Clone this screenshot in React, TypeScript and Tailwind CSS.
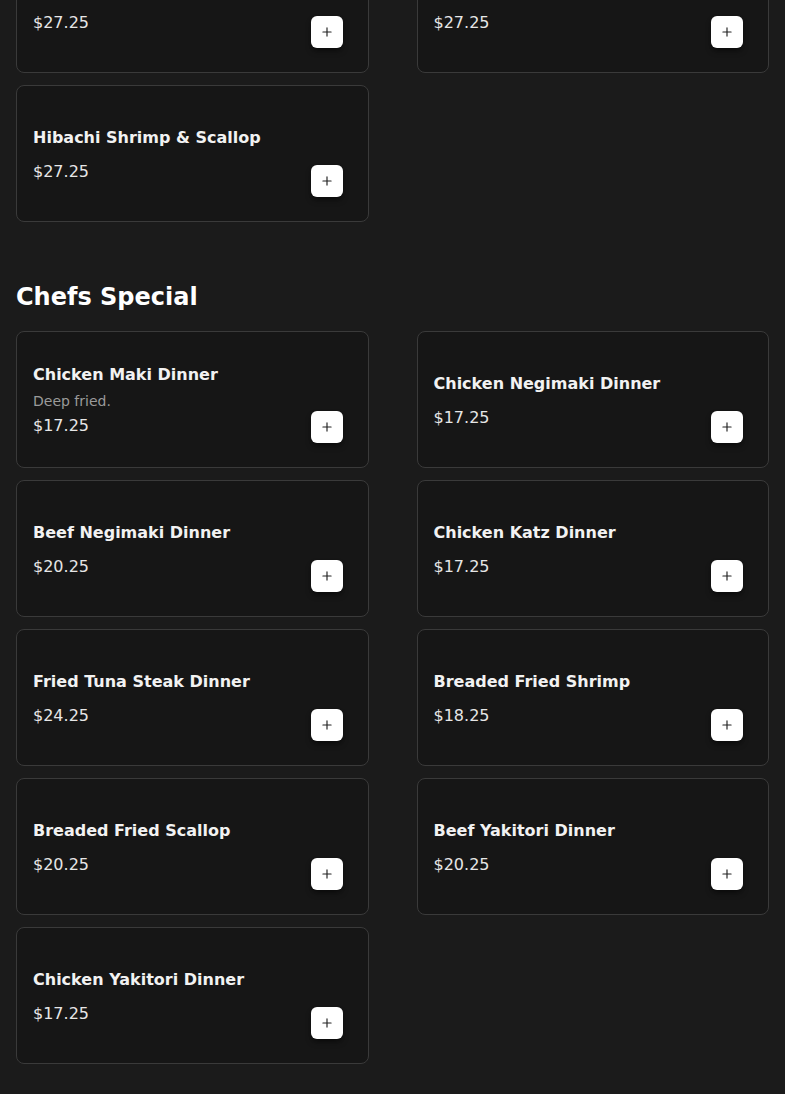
import React from "react";
import { Plus } from "lucide-react";

type Item = {
  name: string;
  price: string;
  description?: string;
};

const hibachi: Item[] = [
  { name: "Hibachi Chicken & Shrimp", price: "$27.25" },
  { name: "Hibachi Steak & Shrimp", price: "$27.25" },
  { name: "Hibachi Shrimp & Scallop", price: "$27.25" },
];

const chefsSpecial: Item[] = [
  { name: "Chicken Maki Dinner", description: "Deep fried.", price: "$17.25" },
  { name: "Chicken Negimaki Dinner", price: "$17.25" },
  { name: "Beef Negimaki Dinner", price: "$20.25" },
  { name: "Chicken Katz Dinner", price: "$17.25" },
  { name: "Fried Tuna Steak Dinner", price: "$24.25" },
  { name: "Breaded Fried Shrimp", price: "$18.25" },
  { name: "Breaded Fried Scallop", price: "$20.25" },
  { name: "Beef Yakitori Dinner", price: "$20.25" },
  { name: "Chicken Yakitori Dinner", price: "$17.25" },
];

function MenuCard({ item }: { item: Item }) {
  return (
    <div className="flex h-[137px] items-center rounded-lg border border-[#3a3a3a] bg-[#161616] p-4">
      <div className="flex-1 pt-0.5">
        <h3 className="text-base leading-6 font-bold text-[#f2f2f2]">{item.name}</h3>
        {item.description && (
          <p className="mt-1 text-sm leading-5 text-[#9a9a9a]">{item.description}</p>
        )}
        <p className={`${item.description ? "mt-[3px]" : "mt-2.5"} text-base leading-6 text-[#e6e6e6]`}>
          {item.price}
        </p>
      </div>
      <button className="mr-[9px] mb-2 flex h-8 w-8 items-center justify-center self-end rounded-md bg-white text-[#222] shadow-md shadow-black/40">
        <Plus size={14} strokeWidth={2} />
      </button>
    </div>
  );
}

export default function App() {
  return (
    <div
      className="min-h-screen overflow-hidden bg-[#1b1b1b] px-4 pb-8"
      style={{ fontFamily: '"DejaVu Sans", sans-serif' }}
    >
      <div className="-mt-[64px] grid grid-cols-2 gap-x-12 gap-y-3">
        {hibachi.map((item) => (
          <MenuCard key={item.name} item={item} />
        ))}
      </div>

      <section className="mt-[59px]">
        <h2 className="mb-[18px] text-2xl leading-8 font-bold text-white">Chefs Special</h2>
        <div className="grid grid-cols-2 gap-x-12 gap-y-3">
          {chefsSpecial.map((item) => (
            <MenuCard key={item.name} item={item} />
          ))}
        </div>
      </section>
    </div>
  );
}
